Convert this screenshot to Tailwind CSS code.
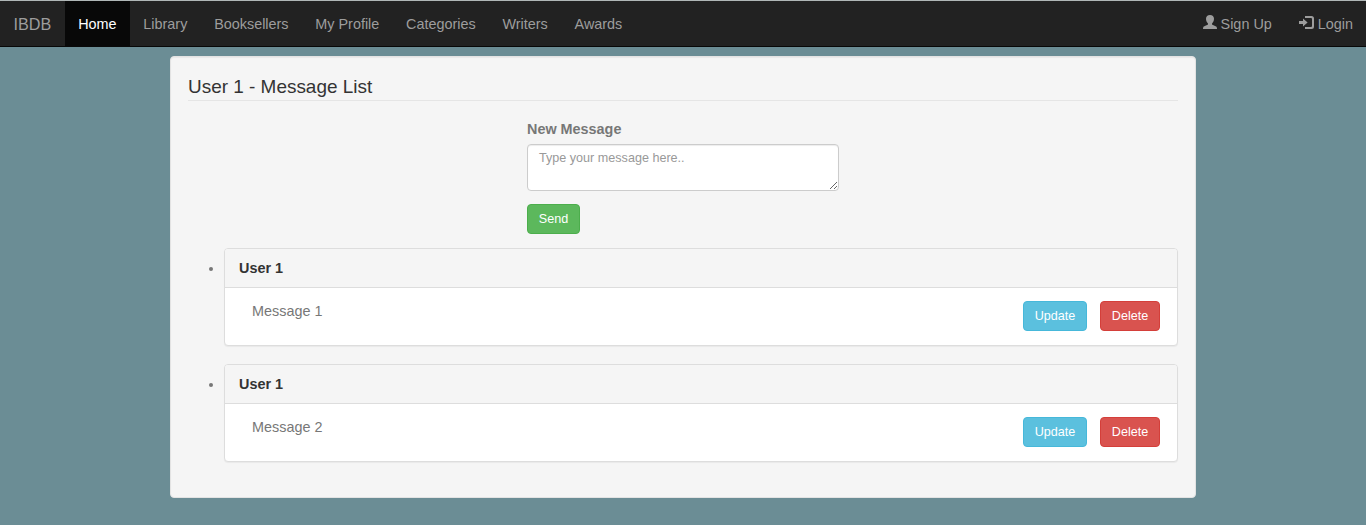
<!DOCTYPE html>
<html lang="en">
<head>
<meta charset="utf-8">
<title>IBDB</title>
<script src="https://cdn.jsdelivr.net/npm/@tailwindcss/browser@4"></script>
</head>
<body class="h-[525px] overflow-hidden bg-[#6b8d95] font-['Liberation_Sans',Arial,sans-serif] text-[14.4px] leading-[20px] text-[#777]">
<nav class="flex h-[47px] justify-between border-t border-b border-t-[#b0b7b7] border-b-[#080808] bg-[#222] leading-[46px] text-[#9d9d9d]">
  <div class="flex">
    <a class="px-[13.5px] text-[16.2px]">IBDB</a>
    <a class="bg-[#080808] px-[13.4px] text-white">Home</a>
    <a class="px-[13.4px]">Library</a>
    <a class="px-[13.4px]">Booksellers</a>
    <a class="px-[13.4px]">My Profile</a>
    <a class="px-[13.4px]">Categories</a>
    <a class="px-[13.4px]">Writers</a>
    <a class="px-[13.4px]">Awards</a>
  </div>
  <div class="flex">
    <a class="flex gap-1 px-[13.5px]"><svg class="mt-[14px] h-[14px] w-[14px]" viewBox="0 0 14 14" fill="currentColor"><path d="M7 0C4.500 0 3 1.400 3 3.700C3 5.800 3.900 7.300 4.900 8.300V9.600C4.700 10.300 1 11 .4 12.100C0 12.700 0 13.300 0 14H14C14 13.300 14 12.700 13.600 12.100C13 11 9.300 10.300 9.100 9.600V8.300C10.100 7.300 11 5.800 11 3.700C11 1.400 9.500 0 7 0Z"/></svg>Sign Up</a>
    <a class="flex gap-1 pr-[13px] pl-[13.5px]"><svg class="mt-[15px] h-[13px] w-[15px]" viewBox="0 0 15 13" fill="currentColor"><path d="M0 5H4V2.400L8.600 6.500L4 10.600V8H0Z"/><path d="M6 0H12.500Q15 0 15 2.500V10.500Q15 13 12.500 13H6V11H12Q13 11 13 10V3Q13 2 12 2H6Z"/></svg>Login</a>
  </div>
</nav>
<main class="mx-auto mt-[9px] h-[442px] w-[1026px] rounded-[4px] border border-[#e3e3e3] bg-[#f5f5f5] px-[17px] pt-[17px] shadow-[inset_0_1px_1px_rgba(0,0,0,0.05)]">
  <h1 class="h-[27px] border-b border-[#e5e5e5] text-[18.95px] leading-[26px] text-[#333]">User 1 - Message List</h1>
  <form class="ml-[339px] flex w-[312px] flex-col items-start pt-[18px]">
    <label for="msg" class="mb-[5px] h-5 font-bold">New Message</label>
    <textarea id="msg" placeholder="Type your message here.." class="block h-[47px] w-full resize rounded-[4px] border border-[#ccc] bg-white px-[11px] py-[4px] text-[12.6px] leading-[18px] shadow-[inset_0_1px_1px_rgba(0,0,0,0.075)] placeholder:text-[#999]"></textarea>
    <button type="button" class="mt-[13px] h-[30px] w-[53px] rounded-[4px] border border-[#4cae4c] bg-[#5cb85c] text-[12.6px] text-white">Send</button>
  </form>
  <ul class="mt-[14px] flex list-disc flex-col gap-[18px] pl-[36px]">
    <li class="h-[98px]">
      <div class="flex h-[98px] flex-col overflow-hidden rounded-[4px] border border-[#ddd] bg-white shadow-[0_1px_1px_rgba(0,0,0,0.05)]">
        <div class="h-[39px] border-b border-[#ddd] bg-[#f5f5f5] pl-[14px] leading-[38px] font-bold text-[#333]">User 1</div>
        <div class="flex justify-between pt-[13px] pr-[17px] pl-[27px]">
          <p>Message 1</p>
          <div class="flex gap-[13px] text-[12.6px] text-white">
            <button type="button" class="h-[30px] w-[64px] rounded-[4px] border border-[#46b8da] bg-[#5bc0de]">Update</button>
            <button type="button" class="h-[30px] w-[60px] rounded-[4px] border border-[#d43f3a] bg-[#d9534f]">Delete</button>
          </div>
        </div>
      </div>
    </li>
    <li class="h-[98px]">
      <div class="flex h-[98px] flex-col overflow-hidden rounded-[4px] border border-[#ddd] bg-white shadow-[0_1px_1px_rgba(0,0,0,0.05)]">
        <div class="h-[39px] border-b border-[#ddd] bg-[#f5f5f5] pl-[14px] leading-[38px] font-bold text-[#333]">User 1</div>
        <div class="flex justify-between pt-[13px] pr-[17px] pl-[27px]">
          <p>Message 2</p>
          <div class="flex gap-[13px] text-[12.6px] text-white">
            <button type="button" class="h-[30px] w-[64px] rounded-[4px] border border-[#46b8da] bg-[#5bc0de]">Update</button>
            <button type="button" class="h-[30px] w-[60px] rounded-[4px] border border-[#d43f3a] bg-[#d9534f]">Delete</button>
          </div>
        </div>
      </div>
    </li>
  </ul>
</main>
</body>
</html>
